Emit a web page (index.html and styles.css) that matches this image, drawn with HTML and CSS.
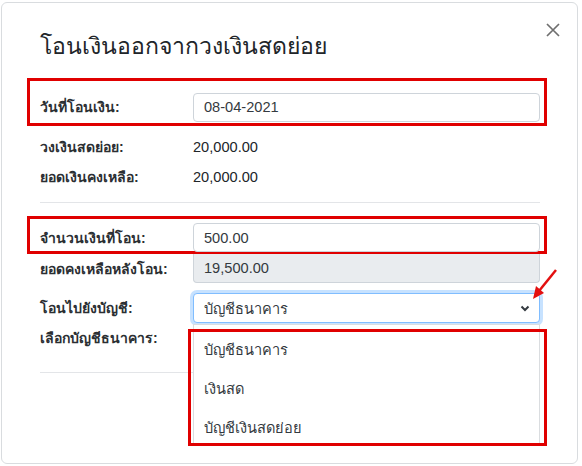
FILE: index.html
```html
<!DOCTYPE html>
<html lang="th">
<head>
  <meta charset="UTF-8" />
  <title>โอนเงินออกจากวงเงินสดย่อย</title>
  <link rel="stylesheet" href="styles.css">
</head>
<body>

<div class="modal">
  <!-- Header -->
  <div class="modal-header">
    <h2 class="modal-title">โอนเงินออกจากวงเงินสดย่อย</h2>
    <button class="close" type="button" aria-label="Close">
      <svg width="14" height="14" viewBox="0 0 14 14">
        <path d="M1 1 L13 13 M13 1 L1 13" stroke="#6f6f6f" stroke-width="1.7" fill="none" />
      </svg>
    </button>
  </div>

  <!-- Body -->
  <div class="modal-body">
    <div class="row mark first">
      <label>วันที่โอนเงิน:</label>
      <div class="field">08-04-2021</div>
    </div>

    <div class="row plain">
      <label>วงเงินสดย่อย:</label>
      <div class="value">20,000.00</div>
    </div>
    <div class="row plain">
      <label>ยอดเงินคงเหลือ:</label>
      <div class="value">20,000.00</div>
    </div>

    <hr class="divider">

    <div class="row mark second">
      <label>จำนวนเงินที่โอน:</label>
      <div class="field">500.00</div>
    </div>
    <div class="row plain readonly-row">
      <label>ยอดคงเหลือหลังโอน:</label>
      <div class="field readonly">19,500.00</div>
    </div>

    <div class="row plain select-row">
      <label>โอนไปยังบัญชี:</label>
      <div class="select-wrap">
        <div class="field select">
          <span>บัญชีธนาคาร</span>
          <svg class="chevron" width="10" height="7" viewBox="0 0 10 7">
            <path d="M1.5 1.5 L5 5 L8.5 1.5" stroke="#343a40" stroke-width="2" fill="none" />
          </svg>
        </div>

        <!-- open dropdown -->
        <ul class="options">
          <li>บัญชีธนาคาร</li>
          <li>เงินสด</li>
          <li>บัญชีเงินสดย่อย</li>
        </ul>
        <div class="options-mark"></div>

        <svg class="pointer" width="30" height="34" viewBox="0 0 30 34">
          <path d="M26 2 L9 23" stroke="#e31010" stroke-width="2.5" fill="none" />
          <path d="M3 31 L6 18 L14 25 Z" fill="#e31010" />
        </svg>
      </div>
    </div>
    <div class="row plain">
      <label>เลือกบัญชีธนาคาร:</label>
      <div></div>
    </div>

    <hr class="divider last">
  </div>
</div>

</body>
</html>
```

FILE: styles.css
```css
body {
  margin: 0;
  padding: 2px 4px 0 1px;
  background: #fff;
  color: #212529;
  font-family: "Liberation Sans", "Noto Sans", sans-serif;
}

.modal {
  height: 462px;
  border: 1px solid #d9dcdf;
  border-radius: 6px;
  box-sizing: border-box;
}

.modal-header {
  display: flex;
  justify-content: space-between;
  align-items: flex-start;
  padding: 27px 17px 0 38px;
}

.modal-title {
  margin: 0;
  font-size: 23px;
  font-weight: 400;
  line-height: 32px;
  color: #212529;
}

.close {
  background: none;
  border: none;
  padding: 0;
  margin-top: -7px;
  width: 14px;
  height: 14px;
  cursor: pointer;
}

.modal-body {
  padding: 16px 37px 0 38px;
}

.row {
  display: grid;
  grid-template-columns: 153px 1fr;
  align-items: center;
  height: 30px;
}

.row label {
  font-weight: bold;
  font-size: 14px;
  color: #2b2f33;
}

.value {
  font-size: 14.6px;
  color: #212529;
}

/* highlighted rows */
.mark {
  box-sizing: content-box;
  margin: 0 -7px 0 -13px;
  border: 3px solid #e00000;
  padding: 0 4px 0 10px;
}

.mark.first {
  padding-top: 11px;
  padding-bottom: 1px;
}

.mark.second {
  margin-top: 13px;
  padding-top: 4px;
  height: 28px;
}

.row.plain:nth-child(2) {
  margin-top: 6px;
}

.field {
  box-sizing: border-box;
  height: 30px;
  border: 1px solid #ced4da;
  border-radius: 4px;
  padding: 0 10px;
  display: flex;
  align-items: center;
  font-size: 14.6px;
  color: #343a40;
  background: #fff;
}

.mark .field {
  height: 29px;
}

.readonly {
  background: #e9ecef;
  border-top: none;
  border-radius: 0 0 4px 4px;
  height: 29px;
}

.readonly-row {
  height: 29px;
}

.select-row {
  margin-top: 10px;
}

.select-wrap {
  position: relative;
}

.select {
  justify-content: space-between;
  border-color: #80bdff;
  box-shadow: 0 0 0 3px rgba(0, 123, 255, 0.22);
  padding-right: 9px;
}

.chevron {
  margin-top: 1px;
}

.options {
  position: absolute;
  top: 31px;
  left: 0;
  right: 0;
  margin: 0;
  padding: 6px 0 0;
  list-style: none;
  background: #fff;
  border: 1px solid #dadde0;
  height: 120px;
  box-sizing: border-box;
  z-index: 2;
}

.options li {
  height: 39px;
  line-height: 39px;
  padding-left: 10px;
  font-size: 14.6px;
  color: #343a40;
}

.options-mark {
  position: absolute;
  top: 36px;
  left: -5px;
  width: 353px;
  height: 111px;
  border: 3px solid #e00000;
  z-index: 3;
}

.pointer {
  position: absolute;
  top: -25px;
  right: -20px;
  z-index: 3;
}

.divider {
  border: none;
  border-top: 1px solid #e3e5e8;
  margin: 10px 0 0;
}

.divider.last {
  margin-top: 19px;
}
```
